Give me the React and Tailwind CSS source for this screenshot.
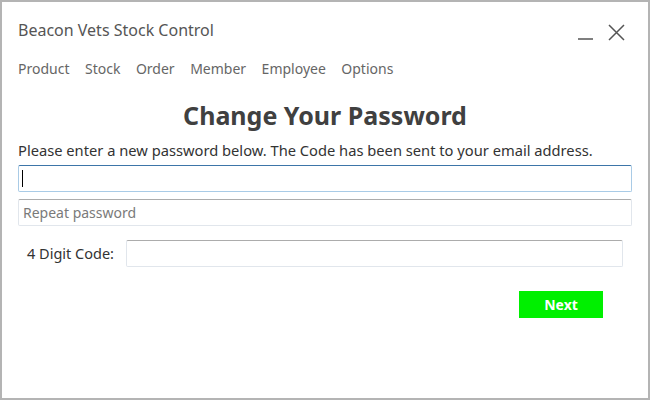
import { useState } from "react";

const menu = ["Product", "Stock", "Order", "Member", "Employee", "Options"];

function WindowButtons() {
  return (
    <div className="flex items-end gap-[14px] pt-[10px]">
      <svg width="16" height="16" viewBox="0 0 16 16" className="mb-[1px]">
        <line x1="0" y1="15" x2="15" y2="15" stroke="#555" strokeWidth="1.5" />
      </svg>
      <svg width="17" height="17" viewBox="0 0 17 17">
        <path d="M1 1 L16 16 M16 1 L1 16" stroke="#555" strokeWidth="1.5" fill="none" />
      </svg>
    </div>
  );
}

export default function App() {
  const [password, setPassword] = useState("");
  const [repeat, setRepeat] = useState("");
  const [code, setCode] = useState("");

  return (
    <div
      className="w-[650px] h-[400px] bg-white border-2 border-[#b4b4b4] flex flex-col"
      style={{ fontFamily: '"Noto Sans", "Open Sans", sans-serif' }}
    >
      <div className="flex justify-between pl-4 pr-[23px]">
        <div className="pt-[17px] text-[16px] text-[#555] leading-[22px]">
          Beacon Vets Stock Control
        </div>
        <WindowButtons />
      </div>

      <nav className="flex gap-[15.5px] pl-4 pt-[18px] text-[14px] text-[#666] leading-[20px]">
        {menu.map((m) => (
          <span key={m}>{m}</span>
        ))}
      </nav>

      <h1 className="text-center font-bold text-[25px] text-[#404040] leading-[32px] mt-[20px]">
        Change Your Password
      </h1>

      <p className="pl-4 text-[14.7px] text-[#333] leading-[20px] mt-[9px]">
        Please enter a new password below. The Code has been sent to your email address.
      </p>

      <div className="flex flex-col gap-[7px] pl-4 pr-4 mt-[5px]">
        <div className="relative">
          <input
            autoFocus
            type="password"
            value={password}
            onChange={(e) => setPassword(e.target.value)}
            className="h-[27px] w-full border border-[#a9cbe6] border-t-[#3d75a8] rounded-[2px] px-1 outline-none text-[14px] caret-black"
          />
          {password === "" && (
            <span className="absolute left-[4px] top-[5px] h-[17px] w-px bg-black pointer-events-none" />
          )}
        </div>
        <input
          type="password"
          value={repeat}
          onChange={(e) => setRepeat(e.target.value)}
          placeholder="Repeat password"
          className="h-[27px] w-full border border-[#e1e6ec] border-t-[#acacac] rounded-[2px] px-1 outline-none text-[14px] placeholder:text-[#7a7a7a]"
        />
      </div>

      <div className="flex items-center pl-[25px] pr-[25px] mt-[14px]">
        <label className="text-[14.5px] text-[#333] w-[99px]">4 Digit Code:</label>
        <input
          value={code}
          onChange={(e) => setCode(e.target.value)}
          className="h-[27px] flex-1 border border-[#e1e6ec] border-t-[#acacac] rounded-[2px] px-1 outline-none text-[14px]"
        />
      </div>

      <div className="flex justify-end pr-[45px] mt-[24px]">
        <button className="w-[84px] h-[27px] bg-[#00f000] text-white font-bold text-[14px]">
          Next
        </button>
      </div>
    </div>
  );
}
